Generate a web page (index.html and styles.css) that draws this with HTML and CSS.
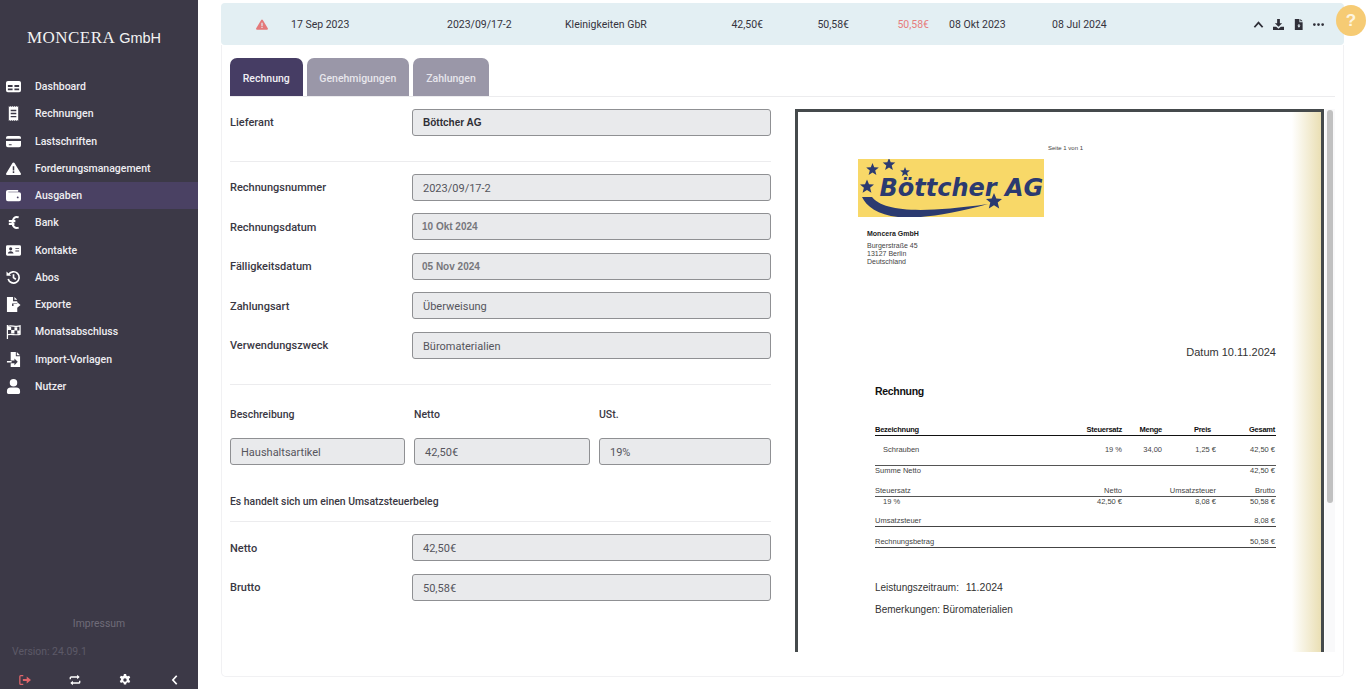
FILE: index.html
```html
<!DOCTYPE html>
<html lang="de">
<head>
<meta charset="utf-8">
<title>Moncera</title>
<link rel="stylesheet" href="styles.css">
</head>
<body>
<div class="app">
  <aside class="sidebar">
    <div class="brand"><span class="brand-name">MONCERA</span> <span class="brand-suffix">GmbH</span></div>
    <nav class="nav">
      <a class="nav-item"><svg class="nav-icon" viewBox="0 0 16 14"><path fill="#fff" fill-rule="evenodd" d="M2 1h12a2 2 0 0 1 2 2v8a2 2 0 0 1-2 2H2a2 2 0 0 1-2-2V3a2 2 0 0 1 2-2zM2 5.500v2h5v-2zm7 0v2h5v-2zM2 9v2h5V9zm7 0v2h5V9z"/></svg><span>Dashboard</span></a>
      <a class="nav-item"><svg class="nav-icon" viewBox="0 0 16 16"><path fill="#fff" fill-rule="evenodd" d="M3 0l1 1 1-1 1 1 1-1 1 1 1-1 1 1 1-1 1 1 1-1v16l-1-1-1 1-1-1-1 1-1-1-1 1-1-1-1 1-1-1-1 1zM5 4v1.500h6V4zm0 3.300v1.500h6V7.300zm0 3.300v1.500h6v-1.500z"/></svg><span>Rechnungen</span></a>
      <a class="nav-item"><svg class="nav-icon" viewBox="0 0 16 14"><path fill="#fff" d="M2 1h12a2 2 0 0 1 2 2v1H0V3a2 2 0 0 1 2-2zM0 6.500h16V11a2 2 0 0 1-2 2H2a2 2 0 0 1-2-2zM3 10v1h3v-1z"/></svg><span>Lastschriften</span></a>
      <a class="nav-item"><svg class="nav-icon" viewBox="0 0 16 14"><path fill="#fff" fill-rule="evenodd" d="M8 0.500a1.300 1.300 0 0 1 1.100.6l6.600 11a1.200 1.200 0 0 1-1 1.900H1.300a1.200 1.200 0 0 1-1-1.900l6.600-11A1.300 1.300 0 0 1 8 .5zM7.200 4.500v4.500h1.600V4.500zM7.200 10v1.700h1.600V10z"/></svg><span>Forderungsmanagement</span></a>
      <a class="nav-item is-active"><svg class="nav-icon" viewBox="0 0 16 14"><path fill="#fff" fill-rule="evenodd" d="M2 1h11v2H2.500v.5H14a2 2 0 0 1 2 2V11a2 2 0 0 1-2 2H2a2 2 0 0 1-2-2V3a2 2 0 0 1 2-2zm10.500 7a1 1 0 1 0 0 2 1 1 0 0 0 0-2z"/></svg><span>Ausgaben</span></a>
      <a class="nav-item"><svg class="nav-icon" viewBox="0 0 16 16"><path fill="none" stroke="#fff" stroke-width="2.200" d="M13.500 2.500C9.500 1 7 4 7 8s2.500 7 6.500 5.500M3 6.500h7M3 9.500h6"/></svg><span>Bank</span></a>
      <a class="nav-item"><svg class="nav-icon" viewBox="0 0 16 13"><path fill="#fff" fill-rule="evenodd" d="M1.500 1h13A1.500 1.500 0 0 1 16 2.500v8a1.500 1.500 0 0 1-1.500 1.500h-13A1.500 1.500 0 0 1 0 10.500v-8A1.500 1.500 0 0 1 1.500 1zM5 3a1.700 1.700 0 1 0 0 3.400A1.700 1.700 0 0 0 5 3zM2 9.800h6c0-1.500-1.200-2.500-3-2.500s-3 1-3 2.500zM10 4v1h4V4zm0 2.500v1h4v-1z"/></svg><span>Kontakte</span></a>
      <a class="nav-item"><svg class="nav-icon" viewBox="0 0 16 16"><path fill="none" stroke="#fff" stroke-width="1.800" d="M2.800 5a6 6 0 1 1-.5 4.500M8 4.500V8l2.500 2"/><path fill="#fff" d="M0.500 1.500l5 4.500H.5z"/></svg><span>Abos</span></a>
      <a class="nav-item"><svg class="nav-icon" viewBox="0 0 16 16"><path fill="#fff" d="M1 0h6.500v4.500H12V7H6.500v2.500H12V16H1zM9 0l3 3H9zM8 7.500h4V5.500l3.500 3-3.500 3v-2H8z"/></svg><span>Exporte</span></a>
      <a class="nav-item"><svg class="nav-icon" viewBox="0 0 16 16"><path fill="none" stroke="#fff" stroke-width="1.300" d="M1.500 1v15M1.500 2.500c4-1.500 9 1 13.500-.5v9c-4.500 1.500-9.500-1-13.500.5z"/><path fill="#fff" d="M2 3h3.500v3.500H2zM9 3.500h3V7H9zM5.500 6.500H9V10H5.500zM12 7h3v3.300h-3z"/></svg><span>Monatsabschluss</span></a>
      <a class="nav-item"><svg class="nav-icon" viewBox="0 0 16 16"><path fill="#fff" d="M5 0h5.500v4.500H15V16H5v-4h4v2l3.500-3.500L9 7v2H5zM11.500 0L15 3.500h-3.500zM1 9.700h5v1.600H1z"/></svg><span>Import-Vorlagen</span></a>
      <a class="nav-item"><svg class="nav-icon" viewBox="0 0 16 16"><path fill="#fff" d="M8 0a4 4 0 1 1 0 8 4 4 0 0 1 0-8zM5 9h6a4 4 0 0 1 4 4v1.500a1.500 1.500 0 0 1-1.500 1.500h-11A1.500 1.500 0 0 1 1 14.500V13a4 4 0 0 1 4-4z"/></svg><span>Nutzer</span></a>
    </nav>
    <div class="side-foot">
      <div class="impressum">Impressum</div>
      <div class="version">Version: 24.09.1</div>
      <div class="foot-icons">
        <svg class="foot-icon" viewBox="0 0 14 12"><path fill="none" stroke="#e0656a" stroke-width="1.500" d="M5 1H2a1 1 0 0 0-1 1v8a1 1 0 0 0 1 1h3"/><path fill="#e0656a" d="M4.500 4.700h4.500V2l5 4-5 4V7.300H4.500z"/></svg>
        <svg class="foot-icon" viewBox="0 0 14 12"><path fill="none" stroke="#fff" stroke-width="1.600" d="M1.500 5V3.500a1 1 0 0 1 1-1h8M12.500 7v1.500a1 1 0 0 1-1 1h-8"/><path fill="#fff" d="M9.500 0l3 2.500-3 2.500zM4.500 7l-3 2.500 3 2.500z"/></svg>
        <svg class="foot-icon" viewBox="0 0 16 16"><path fill="#fff" fill-rule="evenodd" d="M6.500 0h3l.4 2.200 1.500.8 2.100-.8 1.500 2.600-1.700 1.400v1.700l1.700 1.400-1.500 2.600-2.100-.8-1.500.9-.4 2.100h-3l-.4-2.100-1.500-.9-2.100.8L1 9.300l1.700-1.400V6.200L1 4.800l1.500-2.600 2.100.8 1.500-.8zM8 5.700a2.300 2.300 0 1 0 0 4.600 2.300 2.300 0 0 0 0-4.600z"/></svg>
        <svg class="foot-icon" viewBox="0 0 14 12"><path fill="none" stroke="#fff" stroke-width="2" d="M9 1L4.500 6 9 11"/></svg>
      </div>
    </div>
  </aside>

  <main class="main">
    <div class="invoice-row">
      <svg class="warn" viewBox="0 0 16 14"><path fill="#e4797a" fill-rule="evenodd" d="M8 0.500a1.300 1.300 0 0 1 1.100.6l6.600 11a1.200 1.200 0 0 1-1 1.900H1.300a1.200 1.200 0 0 1-1-1.900l6.600-11A1.300 1.300 0 0 1 8 .5zM7.200 4.500v4.500h1.600V4.500zM7.200 10v1.700h1.600V10z"/></svg>
      <span>17 Sep 2023</span>
      <span>2023/09/17-2</span>
      <span>Kleinigkeiten GbR</span>
      <span class="num">42,50€</span>
      <span class="num">50,58€</span>
      <span class="num is-red">50,58€</span>
      <span class="date-pad">08 Okt 2023</span>
      <span>08 Jul 2024</span>
      <span class="row-actions">
        <svg class="row-icon" viewBox="0 0 12 12"><path fill="none" stroke="#2f2f38" stroke-width="2" d="M1.500 9L6 4l4.500 5"/></svg>
        <svg class="row-icon" viewBox="0 0 12 12"><path fill="#2f2f38" d="M4.500 0h3v4.500H10L6 8.500 2 4.500h2.500zM0 8.500h3.500L6 10.500l2.500-2H12V12H0z"/></svg>
        <svg class="row-icon" viewBox="0 0 12 12"><path fill="#2f2f38" fill-rule="evenodd" d="M2 0h5v3.500h3.500V12H2zM8 0l2.500 2.500H8zM6 5.500V7H4.800l1.700 2.500L8.200 7H7V5.500z"/></svg>
        <svg class="row-icon" viewBox="0 0 12 12"><path fill="#2f2f38" d="M1.500 4.500a1.500 1.500 0 1 1 0 3 1.500 1.500 0 0 1 0-3zm4.500 0a1.500 1.500 0 1 1 0 3 1.500 1.500 0 0 1 0-3zm4.500 0a1.500 1.500 0 1 1 0 3 1.500 1.500 0 0 1 0-3z"/></svg>
      </span>
    </div>

    <section class="card">
      <div class="tabs">
        <div class="tab is-current">Rechnung</div>
        <div class="tab">Genehmigungen</div>
        <div class="tab">Zahlungen</div>
      </div>
      <div class="content">
        <form class="form">
          <div class="field"><label class="field-label">Lieferant</label><div class="input strong">Böttcher AG</div></div>
          <hr class="rule rule-a">
          <div class="field"><label class="field-label">Rechnungsnummer</label><div class="input">2023/09/17-2</div></div>
          <div class="field"><label class="field-label">Rechnungsdatum</label><div class="input sans">10 Okt 2024</div></div>
          <div class="field"><label class="field-label">Fälligkeitsdatum</label><div class="input sans">05 Nov 2024</div></div>
          <div class="field"><label class="field-label">Zahlungsart</label><div class="input">Überweisung</div></div>
          <div class="field"><label class="field-label">Verwendungszweck</label><div class="input">Büromaterialien</div></div>
          <hr class="rule rule-b">
          <div class="lines lines-head"><span>Beschreibung</span><span>Netto</span><span>USt.</span></div>
          <div class="lines"><div class="input">Haushaltsartikel</div><div class="input">42,50€</div><div class="input">19%</div></div>
          <p class="tax-note">Es handelt sich um einen Umsatzsteuerbeleg</p>
          <hr class="rule rule-c">
          <div class="field"><label class="field-label">Netto</label><div class="input">42,50€</div></div>
          <div class="field"><label class="field-label">Brutto</label><div class="input">50,58€</div></div>
        </form>

        <div class="preview">
          <div class="doc">
            <div class="doc-page">
              <div class="doc-pageno">Seite 1 von 1</div>
              <div class="doc-logo">
                <svg class="logo-art" viewBox="0 0 186 58">
                  <path fill="#2b3a70" d="M4 38h10c11 14 46 17 116 7-40 11-70 15-90 13C20 56 8 47 4 38z"/>
                  <g fill="#2b3a70">
                    <path d="M14.500 4l1.700 4.300 4.600.2-3.600 2.900 1.200 4.500-3.900-2.500-3.900 2.500 1.200-4.500-3.600-2.900 4.600-.2z"/>
                    <path d="M31 -1l1.700 4.300 4.600.2-3.600 2.900 1.200 4.500-3.900-2.500-3.900 2.500 1.200-4.500-3.600-2.900 4.600-.2z"/>
                    <path d="M47 8l1.300 3.300 3.600.2-2.800 2.300 1 3.500-3.100-2-3.100 2 1-3.500-2.800-2.300 3.600-.2z"/>
                    <path d="M9 20.500l2 4.800 5 .3-3.900 3.200 1.300 5-4.400-2.800-4.400 2.800 1.300-5L2 25.600l5-.3z"/>
                  </g>
                </svg>
                <span class="logo-text">Böttcher AG</span>
                <svg class="logo-star" viewBox="0 0 16 16"><path fill="#2b3a70" d="M8 0l2.300 5.500 5.900.4-4.500 3.700 1.500 5.800L8 12.200l-5.200 3.200 1.500-5.800L-.2 5.900l5.900-.4z"/></svg>
              </div>
              <div class="doc-addr">
                <strong class="addr-name">Moncera GmbH</strong>
                <div>Burgerstraße 45</div>
                <div>13127 Berlin</div>
                <div>Deutschland</div>
              </div>
              <div class="doc-date">Datum 10.11.2024</div>
              <div class="doc-title">Rechnung</div>
              <div class="doc-table">
                <div class="t-row t-head"><span>Bezeichnung</span><span class="r">Steuersatz</span><span class="r">Menge</span><span class="r pr">Preis</span><span class="r">Gesamt</span></div>
                <div class="t-row t-item"><span class="ind">Schrauben</span><span class="r">19 %</span><span class="r">34,00</span><span class="r">1,25 €</span><span class="r">42,50 €</span></div>
                <div class="t-row t-sum"><span>Summe Netto</span><span></span><span></span><span></span><span class="r">42,50 €</span></div>
                <div class="t-row t-taxhead"><span>Steuersatz</span><span class="r">Netto</span><span></span><span class="r">Umsatzsteuer</span><span class="r">Brutto</span></div>
                <div class="t-row t-tax"><span class="ind">19 %</span><span class="r">42,50 €</span><span></span><span class="r">8,08 €</span><span class="r">50,58 €</span></div>
                <div class="t-row t-total"><span>Umsatzsteuer</span><span></span><span></span><span></span><span class="r">8,08 €</span></div>
                <div class="t-row t-total"><span>Rechnungsbetrag</span><span></span><span></span><span></span><span class="r">50,58 €</span></div>
              </div>
              <div class="doc-period">Leistungszeitraum: <span class="period-value">11.2024</span></div>
              <div class="doc-remark">Bemerkungen: Büromaterialien</div>
            </div>
          </div>
          <div class="scrollbar"><div class="thumb"></div></div>
        </div>
      </div>
    </section>
    <div class="help">?</div>
  </main>
</div>
</body>
</html>
```
FILE: styles.css
```css
* { box-sizing: border-box; }
html, body { margin: 0; height: 100%; overflow: hidden; background: #fff; }
body { font-family: Roboto, "Noto Sans", sans-serif; color: #35333d; }

.app { display: flex; height: 689px; }

/* sidebar */
.sidebar { width: 198px; flex: none; background: #3c3947; display: flex; flex-direction: column; color: #f1f0f3; }
.brand { height: 73px; padding: 28px 0 0 27px; color: #f3f3f3; white-space: nowrap; line-height: 20px; }
.brand-name { font: 17px/20px "Liberation Serif", serif; letter-spacing: .45px; }
.brand-suffix { font: 14.500px/20px "Liberation Sans", sans-serif; }
.nav { display: flex; flex-direction: column; }
.nav-item { height: 27.250px; display: flex; align-items: center; padding-left: 6px; gap: 14px; font-size: 10.500px; font-weight: 500; color: #eeedf1; }
.nav-item.is-active { background: #4a4163; }
.nav-icon { width: 15px; height: 15px; flex: none; }
.side-foot { margin-top: auto; }
.impressum { text-align: center; font-size: 10.400px; line-height: 13px; color: #6f6c79; }
.version { margin-top: 15px; padding-left: 12px; font-size: 10.400px; line-height: 13px; color: #5c5967; }
.foot-icons { display: grid; grid-template-columns: repeat(4, 50px); justify-items: center; padding: 16px 0 3px; }
.foot-icon { width: 12px; height: 12px; }

/* main */
.main { flex: 1; position: relative; padding: 3px 23px 12px; display: flex; flex-direction: column; }
.invoice-row { height: 42px; flex: none; background: #e3eff3; border-radius: 4px; display: grid; align-items: center; grid-template-columns: 35px 156px 118px 130px 68px 86px 80px 123px 100px 1fr; padding-left: 35px; font-size: 10.500px; color: #35333d; }
.invoice-row .num { text-align: right; }
.invoice-row .num.is-red { color: #e77c7c; }
.date-pad { padding-left: 20px; }
.warn { width: 12px; height: 11px; }
.row-actions { display: flex; gap: 9px; align-items: center; justify-content: flex-end; padding-right: 20px; }
.row-icon { width: 11px; height: 11px; }
.help { position: absolute; left: 1138px; top: 5px; width: 30px; height: 31px; border-radius: 50%; background: #f6cb74; color: #fdf5e0; font: 700 17px/31px "Liberation Sans", sans-serif; text-align: center; }

.card { flex: 1; border: 1px solid #f1f1f3; border-top: 0; border-radius: 0 0 5px 5px; padding: 13px 8px 0 8px; display: flex; flex-direction: column; min-height: 0; }
.tabs { display: flex; gap: 4.500px; height: 38.500px; border-bottom: 1px solid #ececee; flex: none; }
.tab { width: 101.500px; height: 38px; padding-top: 14px; text-align: center; background: #9a97a8; color: #e7e6ec; font-size: 10.500px; font-weight: 500; border-radius: 7px 7px 0 0; }
.tab:nth-child(3) { width: 76px; }
.tab.is-current { width: 72.500px; background: #463d64; color: #f0eff4; }

.content { display: flex; gap: 24px; flex: 1; min-height: 0; }
.form { width: 541px; flex: none; padding-top: 12px; }
.field { display: grid; grid-template-columns: 182px 359px; align-items: center; height: 27px; margin-bottom: 12.500px; }
.field-label { font-size: 11px; font-weight: 500; color: #3a3843; position: relative; top: .5px; }
.input { height: 27px; background: #e9eaec; border: 1px solid #8f9093; border-radius: 3px; padding: 1px 10px 0; font-size: 11px; line-height: 25px; color: #55555c; }
.input.strong { font: 700 10px/25px "Liberation Sans", sans-serif; color: #2f2f36; padding-top: 0; }
.input.sans { font-family: "Liberation Sans", sans-serif; font-size: 10px; line-height: 25px; font-weight: 700; color: #77777c; padding: 0 9px; }
.rule { border: 0; border-top: 1px solid #ececee; margin: 0; }
.rule-a { margin: 25px 0 12.250px; }
.rule-b { margin: 25px 0 0; }
.rule-c { margin: 12px 0 12.250px; }
.lines { display: grid; grid-template-columns: 175px 176px 172px; gap: 9px; }
.lines-head { font-size: 10.500px; font-weight: 500; color: #3a3843; margin: 23px 0 16px; line-height: 14px; }
.tax-note { margin: 30px 0 0; font-size: 10.400px; font-weight: 500; line-height: 14px; color: #3a3843; }

/* preview */
.preview { width: 540px; height: 543px; margin-top: 12px; display: flex; gap: 1px; }
.doc { width: 529px; height: 543px; overflow: hidden; border: 3px solid #454a4c; border-bottom: 0; background: #fff; flex: none; }
.doc-page { height: 100%; background: linear-gradient(90deg, #fff 0, #fff 94.400%, #eadfb4 100%); padding: 32px 45px 0 60px; font-family: "Liberation Sans", Arial, sans-serif; color: #2d2d2d; }
.doc-pageno { font-size: 6px; line-height: 8px; padding-left: 190px; color: #444; }
.doc-logo { position: relative; width: 186px; height: 58px; margin-top: 7px; background: #f8d868; overflow: hidden; }
.logo-art { display: block; width: 186px; height: 58px; }
.logo-text { position: absolute; left: 21.500px; top: 15px; font: italic 700 24px/28px "DejaVu Sans", sans-serif; color: #2b3a70; white-space: nowrap; }
.logo-star { position: absolute; left: 128px; top: 34px; width: 16px; height: 16px; }
.doc-addr { margin: 13px 0 0 9px; font-size: 7px; line-height: 8px; color: #444; }
.addr-name { display: block; color: #222; margin-bottom: 4px; }
.doc-date { margin-top: 79px; text-align: right; font-size: 11px; line-height: 14px; color: #333; }
.doc-title { margin: 25.500px 0 0 17px; font-weight: 700; font-size: 10.500px; line-height: 14px; letter-spacing: -.3px; color: #111; }
.doc-table { margin: 25.500px 0 0 17px; font-size: 7.500px; color: #444; }
.t-row { display: grid; grid-template-columns: 208px 40px 40px 54px 1fr; align-items: center; }
.t-row .r { text-align: right; padding-right: 1px; white-space: nowrap; }
.t-row .ind { padding-left: 8px; }
.t-row .pr { padding-right: 6px; }
.t-head { height: 12px; font-weight: 700; color: #111; border-bottom: 1.500px solid #111; letter-spacing: -.25px; }
.t-item { height: 30px; border-bottom: 1px solid #555; padding-bottom: 1px; }
.t-sum { height: 10px; }
.t-taxhead { height: 12px; margin-top: 9px; border-bottom: 1px solid #555; }
.t-tax { height: 9px; }
.t-total { height: 13px; margin-top: 8px; border-bottom: 1px solid #444; align-items: end; padding-bottom: 1px; }
.doc-period { margin: 32px 0 0 17px; font-size: 10px; line-height: 14px; color: #333; }
.period-value { font-size: 10.500px; margin-left: 4px; }
.doc-remark { margin: 8px 0 0 17px; font-size: 10px; line-height: 14px; color: #333; }

.scrollbar { width: 10px; height: 543px; background: #f9f9fa; padding: 1px 2px; }
.thumb { width: 6px; height: 393px; background: #c1c1c1; border-radius: 3px; }
```
